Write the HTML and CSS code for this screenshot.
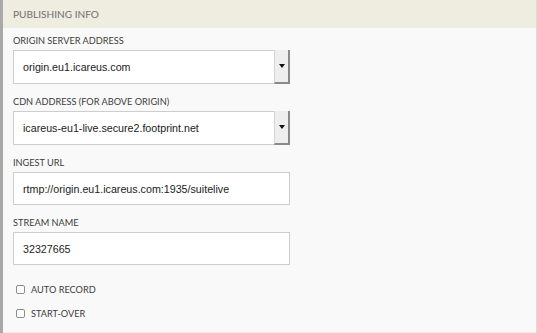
FILE: index.html
```html
<!DOCTYPE html>
<html lang="en">
    <head>
        <meta charset="UTF-8">
        <title>Publishing info</title>
        <link rel="stylesheet" href="styles.css">
    </head>
    <body>
    <div class="panel">
        <div class="panel-head">PUBLISHING INFO</div>
        <div class="panel-body">
            <div class="field">
                <label>ORIGIN SERVER ADDRESS</label>
                <div class="select">
                    <span class="value">origin.eu1.icareus.com</span>
                    <span class="btn"><i class="caret"></i></span>
                </div>
            </div>
            <div class="field">
                <label>CDN ADDRESS (FOR ABOVE ORIGIN)</label>
                <div class="select">
                    <span class="value">icareus-eu1-live.secure2.footprint.net</span>
                    <span class="btn"><i class="caret"></i></span>
                </div>
            </div>
            <div class="field">
                <label>INGEST URL</label>
                <div class="input">rtmp://origin.eu1.icareus.com:1935/suitelive</div>
            </div>
            <div class="field">
                <label>STREAM NAME</label>
                <div class="input">32327665</div>
            </div>
            <div class="check"><span class="box"></span>AUTO RECORD</div>
            <div class="check"><span class="box"></span>START-OVER</div>
        </div>
        <div class="panel-foot"></div>
    </div>
    </body>
</html>
```
FILE: styles.css
```css
*{
    margin:0;
    padding:0;
    box-sizing:border-box;
}
body{
    background:#f9f9f9;
    font-family:Lato,"Open Sans",sans-serif;
}
.panel{
    width:537px;
    height:333px;
    border-left:3px solid #a9a9a9;
    border-right:1px solid #dcdcdc;
    background:#f9f9f9;
    display:flex;
    flex-direction:column;
}
.panel-head{
    height:28px;
    line-height:28px;
    padding-left:10px;
    background:#efece0;
    color:#707070;
    font-size:10.1px;
}
.panel-body{
    flex:1;
    padding:7px 0 0 10px;
}
.field{
    margin-bottom:12px;
}
.field label{
    display:block;
    font-size:9.2px;
    color:#3c3c3c;
    line-height:12px;
    margin-bottom:3px;
}
.select,.input{
    width:277px;
    height:34px;
    background:#fff;
    border:1px solid #cdcdcd;
    display:flex;
    align-items:center;
    font-family:"Liberation Sans",Arial,sans-serif;
    font-size:10.7px;
    color:#222;
}
.input{
    height:33px;
    padding-left:9px;
}
.select .value{
    flex:1;
    padding-left:9px;
}
.select .btn{
    width:16px;
    align-self:stretch;
    margin:-1px -1px -1px 0;
    background:#eeeeee;
    border-left:1px solid #d4d4d4;
    border-right:2px solid #8a8a8a;
    border-bottom:2px solid #8a8a8a;
    display:flex;
    align-items:center;
    justify-content:center;
}
.caret{
    width:0;
    height:0;
    border-left:3.5px solid transparent;
    border-right:3.5px solid transparent;
    border-top:4px solid #111;
}
.check{
    display:flex;
    align-items:center;
    height:24px;
    padding-left:3px;
    font-size:9.2px;
    color:#3c3c3c;
}
.check .box{
    width:9px;
    height:9px;
    border:1px solid #8c8c8c;
    border-radius:2px;
    background:#fff;
    margin-right:6px;
}
.panel-foot{
    height:1px;
    background:#efece0;
}
```
